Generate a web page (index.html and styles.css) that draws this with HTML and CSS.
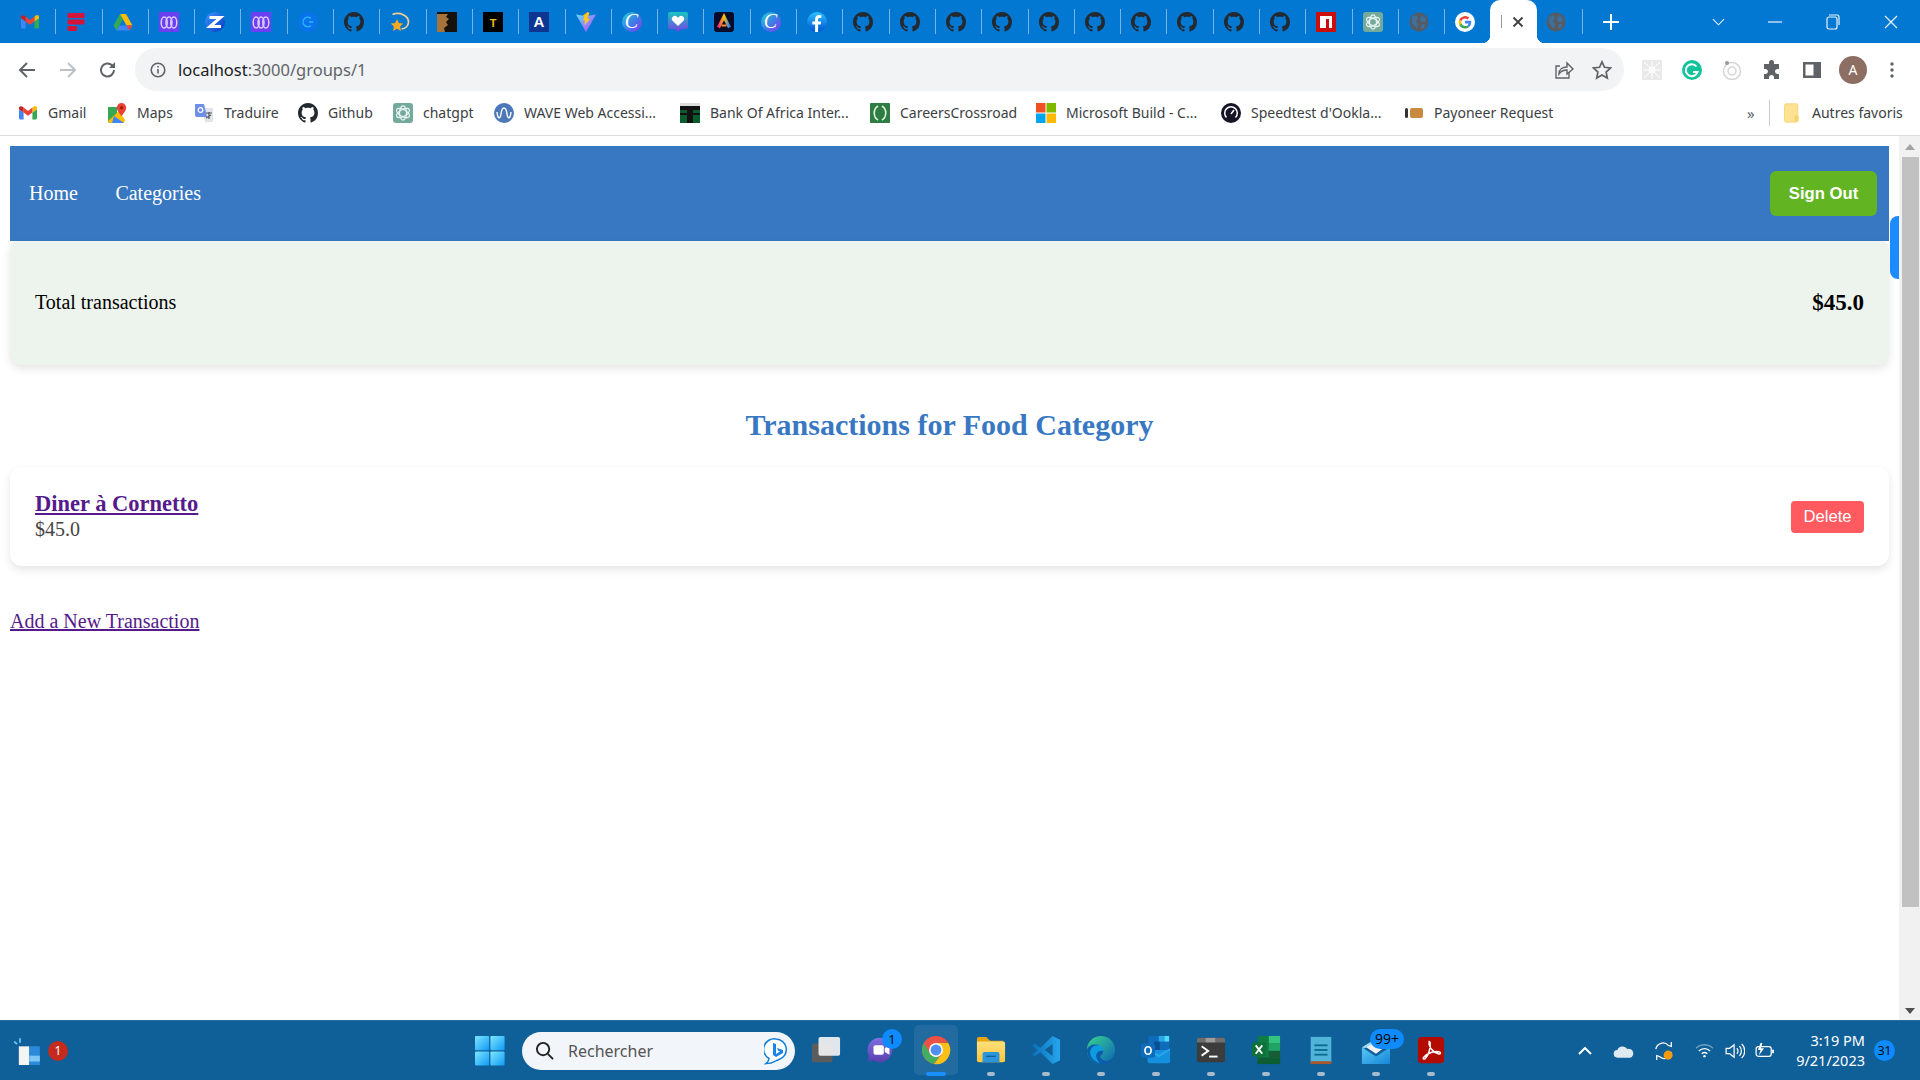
FILE: index.html
```html
<!DOCTYPE html>
<html lang="fr">
<head>
<meta charset="utf-8">
<title>Transactions for Food Category</title>
<link rel="stylesheet" href="styles.css">
</head>
<body>
<svg class="defs" width="0" height="0" aria-hidden="true">
  <defs>
    <linearGradient id="gCanva" x1="0" y1="0" x2="1" y2="1"><stop offset="0" stop-color="#22d3cf"/><stop offset=".55" stop-color="#3f7ae8"/><stop offset="1" stop-color="#8a35ec"/></linearGradient>
    <linearGradient id="gHeart" x1="0" y1="0" x2="0" y2="1"><stop offset="0" stop-color="#16c8c0"/><stop offset="1" stop-color="#7c3fe4"/></linearGradient>
    <linearGradient id="gFb" x1="0" y1="0" x2="0" y2="1"><stop offset="0" stop-color="#2cc0ff"/><stop offset="1" stop-color="#0052d6"/></linearGradient>
    <linearGradient id="gZ" x1="0" y1="0" x2="1" y2="1"><stop offset="0" stop-color="#3a98ff"/><stop offset="1" stop-color="#0736c4"/></linearGradient>
    <linearGradient id="gVite" x1="0" y1="0" x2="1" y2="1"><stop offset="0" stop-color="#5fdcff"/><stop offset="1" stop-color="#c63cff"/></linearGradient>
    <linearGradient id="gAdobe" x1="0" y1="0" x2="1" y2="0"><stop offset="0" stop-color="#ff2d78"/><stop offset=".5" stop-color="#ffc400"/><stop offset="1" stop-color="#2f7bff"/></linearGradient>
    <linearGradient id="gWin" x1="0" y1="0" x2="1" y2="1"><stop offset="0" stop-color="#7fe6ff"/><stop offset="1" stop-color="#0f9af5"/></linearGradient>
    <linearGradient id="gFolder" x1="0" y1="0" x2="0" y2="1"><stop offset="0" stop-color="#ffe07a"/><stop offset="1" stop-color="#fcc43c"/></linearGradient>
    <linearGradient id="gVs" x1="0" y1="0" x2="1" y2="0"><stop offset="0" stop-color="#0a6fb8"/><stop offset="1" stop-color="#26a6ee"/></linearGradient>
    <linearGradient id="gEdge" x1="0" y1="0" x2="1" y2="1"><stop offset="0" stop-color="#38d58a"/><stop offset="1" stop-color="#0c62b8"/></linearGradient>
    <linearGradient id="gMail" x1="0" y1="0" x2="1" y2="1"><stop offset="0" stop-color="#58c8f5"/><stop offset="1" stop-color="#1586d8"/></linearGradient>
    <linearGradient id="gTeams" x1="0" y1="0" x2="0" y2="1"><stop offset="0" stop-color="#7f6fe0"/><stop offset="1" stop-color="#5a3fae"/></linearGradient>

    <symbol id="gh" viewBox="0 0 16 16"><path fill="#24292f" fill-rule="evenodd" d="M8 0C3.58 0 0 3.58 0 8c0 3.54 2.29 6.53 5.47 7.59.4.07.55-.17.55-.38 0-.19-.01-.82-.01-1.49-2.01.37-2.53-.49-2.69-.94-.09-.23-.48-.94-.82-1.13-.28-.15-.68-.52-.01-.53.63-.01 1.08.58 1.23.82.72 1.21 1.87.87 2.33.66.07-.52.28-.87.51-1.07-1.78-.2-3.64-.89-3.64-3.95 0-.87.31-1.59.82-2.15-.08-.2-.36-1.02.08-2.12 0 0 .67-.21 2.2.82.64-.18 1.32-.27 2-.27s1.36.09 2 .27c1.53-1.04 2.2-.82 2.2-.82.44 1.1.16 1.92.08 2.12.51.56.82 1.27.82 2.15 0 3.07-1.87 3.75-3.65 3.95.29.25.54.73.54 1.48 0 1.07-.01 1.93-.01 2.2 0 .21.15.46.55.38A8.013 8.013 0 0016 8c0-4.42-3.58-8-8-8z"/></symbol>
    <symbol id="gmail" viewBox="0 0 20 20">
      <path fill="#4285f4" d="M1 6.200V15c0 .8.6 1.500 1.400 1.500h3.200V9.400z"/>
      <path fill="#34a853" d="M14.400 9.400v7.100h3.200c.8 0 1.400-.7 1.400-1.500V6.200z"/>
      <path fill="#fbbc04" d="M14.400 4.500v4.900L19 6.200V5c0-1.600-1.800-2.500-3-1.500z"/>
      <path fill="#ea4335" d="M5.600 9.400V4.500L10 8l4.400-3.500v4.900L10 12.800z"/>
      <path fill="#c5221f" d="M1 5v1.200l4.600 3.200V4.500L4 3.500C2.800 2.600 1 3.500 1 5z"/>
    </symbol>
    <symbol id="fbars" viewBox="0 0 20 20"><g fill="#d6143a"><rect x="1.500" y="1" width="17" height="5" rx="1"/><rect x="1.500" y="7.400" width="17" height="5" rx="1"/><rect x="1.500" y="14" width="9.500" height="5" rx="1"/></g></symbol>
    <symbol id="drive" viewBox="0 0 20 20">
      <path fill="#34a853" d="M7 2 .5 13.500l3 5L10 7z"/>
      <path fill="#fbbc04" d="M7 2h6l6.500 11.500h-6z"/>
      <path fill="#4285f4" d="M3.500 18.500h13l3-5H6.500z"/>
      <path fill="#ea4335" d="M16.500 18.500l3-5h-6z"/>
    </symbol>
    <symbol id="mm" viewBox="0 0 20 20"><rect width="20" height="20" fill="#6d3ff2"/><g fill="none" stroke="#dccfff" stroke-width="1.500"><ellipse cx="5.200" cy="10.500" rx="3" ry="5.500"/><ellipse cx="10" cy="10.500" rx="3" ry="5.500"/><ellipse cx="14.800" cy="10.500" rx="3" ry="5.500"/></g></symbol>
    <symbol id="zalo" viewBox="0 0 20 20"><circle cx="10" cy="10" r="10" fill="url(#gZ)"/><path fill="none" stroke="#fff" stroke-width="3" d="M4.500 5.500h11L5 14.500h11"/></symbol>
    <symbol id="cblue" viewBox="0 0 20 20"><circle cx="10" cy="10" r="10" fill="#0a72ea"/><path fill="none" stroke="#25bdf8" stroke-width="1.400" d="M12.800 6.400a4.700 4.700 0 1 0 0 7.200M10.800 10h4.400"/></symbol>
    <symbol id="star" viewBox="0 0 20 20"><path fill="none" stroke="#f4cf8f" stroke-width="1.700" d="M2.500 2.500c7-3 16 1 16 7.500 0 4-3.500 6.500-7 7"/><path fill="#f7a823" d="M7 7l1.900 4 4.400.5-3.200 3 .9 4.500-4-2.300-4 2.300.9-4.500-3.200-3 4.400-.5z"/></symbol>
    <symbol id="brown" viewBox="0 0 20 20"><rect width="20" height="20" fill="#16110d"/><path fill="#a6743a" d="M0 2h11l-2 3 3 2-3 3 2 3-4 3 1 4H0z"/></symbol>
    <symbol id="ttile" viewBox="0 0 20 20"><rect width="20" height="20" fill="#000"/><text class="ico-t ico-t-y" x="10" y="14.500">T</text></symbol>
    <symbol id="atile" viewBox="0 0 20 20"><rect width="20" height="20" fill="#0d3591"/><text class="ico-t ico-t-w" x="10" y="15">A</text></symbol>
    <symbol id="vite" viewBox="0 0 20 20"><path fill="url(#gVite)" d="M0 2.500l10 17.500L20 2.500l-6 1-4 .5-4-.5z"/><path fill="#ffc81f" d="M11.500 0 6.500 4l2 .5-1.500 3.500 2 .5-.5 5L14 7l-2.500-.5L13.500 1z"/></symbol>
    <symbol id="canva" viewBox="0 0 20 20"><circle cx="10" cy="10" r="10" fill="url(#gCanva)"/><text class="ico-canva" x="9.500" y="16">C</text></symbol>
    <symbol id="heart" viewBox="0 0 20 20"><path fill="url(#gHeart)" d="M2 0h16a2 2 0 0 1 2 2v13a2 2 0 0 1-2 2h-5l-3 3-3-3H2a2 2 0 0 1-2-2V2a2 2 0 0 1 2-2z"/><path fill="#fff" d="M10 14 4.800 9a3 3 0 0 1 4.200-4.300l1 1 1-1A3 3 0 0 1 15.200 9z"/></symbol>
    <symbol id="adobe" viewBox="0 0 20 20"><rect width="20" height="20" rx="3" fill="#070b28"/><path fill="none" stroke="url(#gAdobe)" stroke-width="3.200" d="M4.500 15.500 10 4.500l5.500 11"/><path stroke="#ff8a2a" stroke-width="2" d="M7.500 13.500h5"/></symbol>
    <symbol id="fb" viewBox="0 0 20 20"><circle cx="10" cy="10" r="10" fill="url(#gFb)"/><path fill="#fff" d="M13.700 12.500l.5-3h-3.100V7.600c0-.9.400-1.600 1.700-1.600h1.500V3.300S13.200 3 12.100 3C9.700 3 8.100 4.400 8.100 6.900v2.600H5.300v3h2.800V20h3v-7.500z"/></symbol>
    <symbol id="npm" viewBox="0 0 20 20"><rect width="20" height="20" fill="#cc0d0d"/><path fill="#fff" d="M4 4h12v12h-3V7h-3v9H4z"/></symbol>
    <symbol id="gpt" viewBox="0 0 20 20"><rect width="20" height="20" rx="3" fill="#74aa9c"/><g fill="none" stroke="#e8f3f0" stroke-width="1.200"><ellipse cx="10" cy="10" rx="3.500" ry="7.200"/><ellipse cx="10" cy="10" rx="3.500" ry="7.200" transform="rotate(60 10 10)"/><ellipse cx="10" cy="10" rx="3.500" ry="7.200" transform="rotate(120 10 10)"/></g></symbol>
    <symbol id="globe" viewBox="0 0 20 20"><circle cx="10" cy="10" r="9.500" fill="#565b62"/><path fill="#2f7fc4" opacity=".6" d="M3 5l4-2 2 3-2 3 2 3-1 5-3-4-2-2zM13 3l4 4-1 3h-4l-1-3zM13 12h3l-1 4-3 1z"/></symbol>
    <symbol id="google" viewBox="0 0 20 20"><circle cx="10" cy="10" r="10" fill="#fff"/><path fill="#4285f4" d="M16.200 10.200c0-.5 0-.9-.1-1.400H10v2.600h3.500a3 3 0 0 1-1.300 2l2 1.600c1.200-1.100 2-2.800 2-4.800z"/><path fill="#34a853" d="M10 16.500c1.800 0 3.200-.6 4.200-1.500l-2-1.600c-.6.400-1.300.6-2.200.6-1.700 0-3.100-1.100-3.600-2.700l-2.100 1.600c1 2.100 3.200 3.600 5.700 3.600z"/><path fill="#fbbc04" d="M6.400 11.800a4 4 0 0 1 0-2.600L4.300 7.600a6.500 6.500 0 0 0 0 5.800z"/><path fill="#ea4335" d="M10 6.500c.9 0 1.800.3 2.400.9l1.900-1.800A6.500 6.500 0 0 0 4.300 7.600l2.100 1.600C6.900 7.600 8.300 6.500 10 6.500z"/></symbol>

    <symbol id="maps" viewBox="0 0 20 20"><path fill="#34a853" d="M1 4l9 0v16H3a2 2 0 0 1-2-2z"/><path fill="#fbbc04" d="M1 18 12 8l6 9-1 3H3z"/><path fill="#4285f4" d="M7 13 17 20H5z"/><path fill="#ea4335" d="M14.500 0a4.700 4.700 0 0 1 4.700 4.700c0 3.200-4.700 8.300-4.700 8.300S9.800 7.900 9.800 4.700A4.700 4.700 0 0 1 14.500 0z"/><circle cx="14.500" cy="4.700" r="1.700" fill="#a61c12"/></symbol>
    <symbol id="translate" viewBox="0 0 20 20"><path fill="#dfe3ea" d="M8 5h11v14H11z"/><path fill="#6d8fe8" d="M1 1h9l3 13H3a2 2 0 0 1-2-2z"/><circle cx="6.500" cy="7" r="2.300" fill="none" stroke="#fff" stroke-width="1.200"/><path stroke="#555" stroke-width="1.200" d="M12 10h6M15 9v7M12 15l5-3"/></symbol>
    <symbol id="wave" viewBox="0 0 20 20"><circle cx="10" cy="10" r="10" fill="#4c78b8"/><path fill="none" stroke="#fff" stroke-width="1.400" d="M3 9c1 9 3.500 6 4 2s1.500-6 3-6 2.500 2 3 6 3 7 4-2"/></symbol>
    <symbol id="bank" viewBox="0 0 20 20"><rect width="20" height="20" fill="#0a5c2c"/><rect width="20" height="3" fill="#ddd"/><path fill="#111" d="M0 3h20v4h-7v3h7v2h-7v8H7v-8H0v-2h7V7H0z"/></symbol>
    <symbol id="careers" viewBox="0 0 20 20"><rect width="20" height="20" rx="1" fill="#2f7d43"/><g fill="none" stroke="#dff2df" stroke-width="1.600"><path d="M8 3C3 6 3 14 8 17M12 3c5 3 5 11 0 14"/></g></symbol>
    <symbol id="ms" viewBox="0 0 20 20"><rect width="9.500" height="9.500" fill="#f25022"/><rect x="10.500" width="9.500" height="9.500" fill="#7fba00"/><rect y="10.500" width="9.500" height="9.500" fill="#00a4ef"/><rect x="10.500" y="10.500" width="9.500" height="9.500" fill="#ffb900"/></symbol>
    <symbol id="speed" viewBox="0 0 20 20"><circle cx="10" cy="10" r="10" fill="#141526"/><path fill="none" stroke="#fff" stroke-width="1.500" d="M5.500 14.500a6.300 6.300 0 1 1 9 0"/><path stroke="#fff" stroke-width="1.500" d="M10 11l3-4"/></symbol>
    <symbol id="payoneer" viewBox="0 0 20 20"><rect x="1" y="5" width="3" height="10" rx="1.500" fill="#333"/><rect x="6" y="5" width="13" height="10" rx="2" fill="#c88a3e"/></symbol>
    <symbol id="folder" viewBox="0 0 20 24"><path fill="#fde293" stroke="#f6d36b" d="M3 1h12a2 2 0 0 1 2 2v18a2 2 0 0 1-2 2H3a2 2 0 0 1-2-2V3a2 2 0 0 1 2-2z"/><rect x="13" y="15" width="5" height="7" rx="1.500" fill="#f6d36b"/></symbol>

    <symbol id="win" viewBox="0 0 30 30"><g fill="url(#gWin)"><rect x="0" y="0" width="14.200" height="14.200" rx="1"/><rect x="15.400" y="0" width="14.200" height="14.200" rx="1"/><rect x="0" y="15.400" width="14.200" height="14.200" rx="1"/><rect x="15.400" y="15.400" width="14.200" height="14.200" rx="1"/></g></symbol>
    <symbol id="taskview" viewBox="0 0 32 32"><rect x="1" y="9" width="22" height="20" rx="2" fill="#5c5c5c"/><rect x="8" y="2" width="23" height="20" rx="2" fill="#f2f2f2" opacity=".92"/></symbol>
    <symbol id="teams" viewBox="0 0 32 32"><path fill="url(#gTeams)" d="M15 3a13 13 0 1 1-8 23.300L2 29l1-7A13 13 0 0 1 15 3z"/><rect x="8" y="11" width="11" height="10" rx="2" fill="#fff"/><path fill="#fff" d="m20 14 5-3v10l-5-3z"/></symbol>
    <symbol id="chrome" viewBox="0 0 32 32"><circle cx="16" cy="16" r="15" fill="#ea4335"/><path fill="#34a853" d="M3 8.500a15 15 0 0 0 11 22.300L20 22H11z"/><path fill="#fbbc04" d="M14 31A15 15 0 0 0 29 8.500H16l6 12z"/><circle cx="16" cy="16" r="7.500" fill="#fff"/><circle cx="16" cy="16" r="5.800" fill="#4285f4"/></symbol>
    <symbol id="explorer" viewBox="0 0 32 32"><path fill="#e7a40e" d="M1 4a2 2 0 0 1 2-2h8l4 4h14v8H1z"/><path fill="url(#gFolder)" d="M1 7h28a2 2 0 0 1 2 2v18a2 2 0 0 1-2 2H3a2 2 0 0 1-2-2z"/><path fill="#2a95dd" d="M7 20a2 2 0 0 1 2-2h14a2 2 0 0 1 2 2v9H7z"/><rect x="11" y="22" width="10" height="1.500" fill="#0f5f98"/></symbol>
    <symbol id="vscode" viewBox="0 0 32 32"><path fill="url(#gVs)" d="M23 1l8 4v22l-8 4L10 18.500 4 23l-3-2 6-5-6-5 3-2 6 4.500zM23 9.500 14.500 16l8.500 6.500z"/></symbol>
    <symbol id="edge" viewBox="0 0 32 32"><circle cx="16" cy="16" r="15" fill="url(#gEdge)"/><path fill="#0c5caa" d="M1 16C3 8 16 8 18 16c1 4-2 5-3 7 2 6 10 6 14 1-3 6-8 7-13 7C8 31 1 24 1 16z"/><path fill="#0d9ce0" d="M6 24C2 18 6 11 12 11c4 0 7 3 6 6-4-1-8 2-7 7 .5 2.500 2 4 4 6-4-1-7-3-9-6z"/></symbol>
    <symbol id="outlook" viewBox="0 0 32 32"><rect x="8" y="1" width="22" height="15" fill="#0f6cbd"/><rect x="19" y="1" width="6" height="6" fill="#28a8ea"/><rect x="25" y="1" width="5" height="6" fill="#50d9ff"/><rect x="14" y="7" width="6" height="9" fill="#0a4f8f"/><path fill="#1490df" d="M7 16h24v12a2 2 0 0 1-2 2H9a2 2 0 0 1-2-2z"/><path fill="#28a8ea" d="m7 16 12 8 12-8v-2L19 21 7 14z"/><rect x="0" y="9" width="15" height="15" rx="2" fill="#0f6cbd"/><ellipse cx="7.500" cy="16.500" rx="3.300" ry="4" fill="none" stroke="#fff" stroke-width="1.800"/></symbol>
    <symbol id="terminal" viewBox="0 0 32 32"><rect x="1" y="3" width="30" height="26" rx="2" fill="#3c3c3c"/><path fill="#6e6e6e" d="M1 5a2 2 0 0 1 2-2h7v5H1z"/><rect x="10" y="3" width="11" height="5" fill="#9c9c9c"/><path fill="#6e6e6e" d="M21 3h8a2 2 0 0 1 2 2v3H21z"/><path fill="none" stroke="#fff" stroke-width="2" d="m6 12 7 5-7 5"/><rect x="14" y="22" width="9" height="2" fill="#fff"/></symbol>
    <symbol id="excel" viewBox="0 0 32 32"><rect x="7" y="1" width="24" height="30" rx="2" fill="#107c41"/><rect x="19" y="1" width="12" height="8" fill="#33c481"/><rect x="19" y="9" width="12" height="8" fill="#21a366"/><rect x="19" y="17" width="12" height="7" fill="#185c37"/><rect x="7" y="24" width="24" height="7" fill="#0e5c31"/><rect x="1" y="8" width="15" height="15" rx="2" fill="#0f7038"/><path stroke="#fff" stroke-width="2" d="m5 11 7 9M12 11l-7 9"/></symbol>
    <symbol id="notepad" viewBox="0 0 32 32"><rect x="5" y="2" width="22" height="28" fill="#4fb4d8"/><rect x="5" y="28" width="22" height="3" fill="#a8562a"/><g fill="#0f6c94"><rect x="9" y="10" width="14" height="2"/><rect x="9" y="15" width="14" height="2"/><rect x="9" y="20" width="14" height="2"/></g></symbol>
    <symbol id="mail" viewBox="0 0 32 32"><path fill="#f2f2f2" d="M4 12 20 3l8 8-12 9z"/><path fill="url(#gMail)" d="M1 13l15 10 15-10v18H1z"/><path fill="#9fdcf7" d="M1 13l10-6 2 2-9 5z"/></symbol>
    <symbol id="acrobat" viewBox="0 0 32 32"><rect x="2" y="2" width="28" height="28" rx="4" fill="#b30b00"/><path fill="none" stroke="#fff" stroke-width="1.600" d="M14 7c-1 5 3 11 10 13 2 .6 3-1 1-2-5-1-13 1-17 6-1 2 1 2 2 1 3-3 6-11 5-17-.2-1-1-1-1-1z"/></symbol>
    <symbol id="bing" viewBox="0 0 24 28"><path fill="#fff" stroke="#0f7fd8" stroke-width="1.500" d="M12 2a10.500 10.500 0 0 1 3 20.500c-2 .8-5 2.500-8 3.500l-5 .5c2-1.500 3-3 3-5A10.500 10.500 0 0 1 12 2z"/><path fill="#1a85e8" d="M9 6l3 1v10l4-2.500-2-1-1-2.500 6 2v3L12 20l-3-2z"/></symbol>
    <symbol id="widgets" viewBox="0 0 24 24"><path stroke="#6cc6ee" stroke-width="1.500" d="M6 1v4M1 4l2.500 2"/><rect x="5" y="8" width="9" height="16" fill="#f4f4f4"/><rect x="14" y="8" width="9" height="16" fill="#2a8bdc"/><rect x="14" y="16" width="9" height="5" fill="#7cc8f2"/></symbol>
  </defs>
</svg>

<div class="screen">
  <header class="tabs">
    <div class="tab"><svg class="fav"><use href="#gmail"/></svg></div>
    <div class="tab"><svg class="fav"><use href="#fbars"/></svg></div>
    <div class="tab"><svg class="fav"><use href="#drive"/></svg></div>
    <div class="tab"><svg class="fav"><use href="#mm"/></svg></div>
    <div class="tab"><svg class="fav"><use href="#zalo"/></svg></div>
    <div class="tab"><svg class="fav"><use href="#mm"/></svg></div>
    <div class="tab"><svg class="fav"><use href="#cblue"/></svg></div>
    <div class="tab"><svg class="fav"><use href="#gh"/></svg></div>
    <div class="tab"><svg class="fav"><use href="#star"/></svg></div>
    <div class="tab"><svg class="fav"><use href="#brown"/></svg></div>
    <div class="tab"><svg class="fav"><use href="#ttile"/></svg></div>
    <div class="tab"><svg class="fav"><use href="#atile"/></svg></div>
    <div class="tab"><svg class="fav"><use href="#vite"/></svg></div>
    <div class="tab"><svg class="fav"><use href="#canva"/></svg></div>
    <div class="tab"><svg class="fav"><use href="#heart"/></svg></div>
    <div class="tab"><svg class="fav"><use href="#adobe"/></svg></div>
    <div class="tab"><svg class="fav"><use href="#canva"/></svg></div>
    <div class="tab"><svg class="fav"><use href="#fb"/></svg></div>
    <div class="tab"><svg class="fav"><use href="#gh"/></svg></div>
    <div class="tab"><svg class="fav"><use href="#gh"/></svg></div>
    <div class="tab"><svg class="fav"><use href="#gh"/></svg></div>
    <div class="tab"><svg class="fav"><use href="#gh"/></svg></div>
    <div class="tab"><svg class="fav"><use href="#gh"/></svg></div>
    <div class="tab"><svg class="fav"><use href="#gh"/></svg></div>
    <div class="tab"><svg class="fav"><use href="#gh"/></svg></div>
    <div class="tab"><svg class="fav"><use href="#gh"/></svg></div>
    <div class="tab"><svg class="fav"><use href="#gh"/></svg></div>
    <div class="tab"><svg class="fav"><use href="#gh"/></svg></div>
    <div class="tab"><svg class="fav"><use href="#npm"/></svg></div>
    <div class="tab"><svg class="fav"><use href="#gpt"/></svg></div>
    <div class="tab"><svg class="fav"><use href="#globe"/></svg></div>
    <div class="tab tab-last"><svg class="fav"><use href="#google"/></svg></div>
    <div class="tab-active">
      <span class="tab-title-stub"></span>
      <svg class="tab-x" viewBox="0 0 12 12"><path d="M1.500 1.500l9 9M10.500 1.500l-9 9"/></svg>
    </div>
    <div class="tab tab-after"><svg class="fav"><use href="#globe"/></svg></div>
    <svg class="tab-new" viewBox="0 0 16 16"><path d="M8 0v16M0 8h16"/></svg>
    <div class="win-controls">
      <svg class="win-btn win-chev" viewBox="0 0 14 8"><path d="M1 1l6 6 6-6"/></svg>
      <svg class="win-btn win-min" viewBox="0 0 14 2"><path d="M0 1h14"/></svg>
      <svg class="win-btn win-max" viewBox="0 0 14 16"><path d="M3 1h8a2 2 0 0 1 2 2v8M1 5a2 2 0 0 1 2-2h6a2 2 0 0 1 2 2v8a2 2 0 0 1-2 2H3a2 2 0 0 1-2-2z"/></svg>
      <svg class="win-btn win-close" viewBox="0 0 14 14"><path d="M1 1l12 12M13 1 1 13"/></svg>
    </div>
  </header>

  <div class="toolbar">
    <svg class="tb-ico tb-back" viewBox="0 0 18 18"><path d="M17 9H2M9 2 2 9l7 7"/></svg>
    <svg class="tb-ico tb-fwd" viewBox="0 0 18 18"><path d="M1 9h15M9 2l7 7-7 7"/></svg>
    <svg class="tb-ico tb-reload" viewBox="0 0 18 18"><path d="M15 9a6.500 6.500 0 1 1-2-4.700L15 6"/><path class="tb-fill" d="M16 1v6h-6z"/></svg>
    <div class="omnibox">
      <svg class="omni-info" viewBox="0 0 16 16"><circle cx="8" cy="8" r="6.800"/><path d="M8 7v4.500M8 4v1.600"/></svg>
      <span class="omni-url"><span class="omni-host">localhost</span>:3000/groups/1</span>
      <svg class="omni-share" viewBox="0 0 20 20"><path d="M15 12v6H2V6h4"/><path d="M5 14c0-5 4-7 8-7V3l6 6-6 5v-4c-3 0-6 1-8 4z"/></svg>
      <svg class="omni-star" viewBox="0 0 20 20"><path d="M10 1.800l2.500 5.500 6 .7-4.400 4 1.200 6L10 15l-5.300 3 1.200-6-4.400-4 6-.7z"/></svg>
    </div>
    <div class="ext-row">
      <svg class="ext" viewBox="0 0 20 20"><rect width="20" height="20" rx="1" fill="#e9e9e9"/><g fill="none" stroke="#fff" stroke-width="1"><circle cx="10" cy="10" r="3"/><path d="M2 2l16 16M18 2 2 18M10 1v18M1 10h18"/></g></svg>
      <svg class="ext" viewBox="0 0 20 20"><circle cx="10" cy="10" r="10" fill="#15c39a"/><path fill="none" stroke="#fff" stroke-width="2" d="M14.500 6.500a6 6 0 1 0 1 5.500h-4.500"/></svg>
      <svg class="ext" viewBox="0 0 20 20"><g fill="none" stroke="#d4d4d4" stroke-width="1.500"><circle cx="10" cy="11" r="8.500"/><circle cx="10" cy="11" r="4"/></g><circle cx="5" cy="3" r="2" fill="#999"/></svg>
      <svg class="ext" viewBox="0 0 20 20"><path fill="#5f6368" d="M7 2.500a2.500 2.500 0 0 1 5 0V4h5v5h-1.500a2.500 2.500 0 0 0 0 5H17v5h-5v-1.500a2.500 2.500 0 0 0-5 0V19H2v-5h1.500a2.500 2.500 0 0 0 0-5H2V4h5z"/></svg>
      <svg class="ext" viewBox="0 0 20 20"><path fill="#5f6368" fill-rule="evenodd" d="M1 2h18v16H1zM3.500 4.500v11h8v-11z"/></svg>
      <span class="avatar">A</span>
      <svg class="ext-dots" viewBox="0 0 4 16"><circle cx="2" cy="2" r="1.700"/><circle cx="2" cy="8" r="1.700"/><circle cx="2" cy="14" r="1.700"/></svg>
    </div>
  </div>

  <nav class="bookmarks">
    <a class="bm"><svg class="fav"><use href="#gmail"/></svg>Gmail</a>
    <a class="bm"><svg class="fav"><use href="#maps"/></svg>Maps</a>
    <a class="bm"><svg class="fav"><use href="#translate"/></svg>Traduire</a>
    <a class="bm"><svg class="fav"><use href="#gh"/></svg>Github</a>
    <a class="bm"><svg class="fav"><use href="#gpt"/></svg>chatgpt</a>
    <a class="bm"><svg class="fav"><use href="#wave"/></svg>WAVE Web Accessi...</a>
    <a class="bm"><svg class="fav"><use href="#bank"/></svg>Bank Of Africa Inter...</a>
    <a class="bm"><svg class="fav"><use href="#careers"/></svg>CareersCrossroad</a>
    <a class="bm"><svg class="fav"><use href="#ms"/></svg>Microsoft Build - C...</a>
    <a class="bm"><svg class="fav"><use href="#speed"/></svg>Speedtest d'Ookla...</a>
    <a class="bm"><svg class="fav"><use href="#payoneer"/></svg>Payoneer Request</a>
    <span class="bm-more">»</span>
    <a class="bm bm-other"><svg class="fav"><use href="#folder"/></svg>Autres favoris</a>
  </nav>

  <main class="viewport">
    <div class="page">
      <div class="app-nav">
        <a class="app-link">Home</a>
        <a class="app-link">Categories</a>
        <button class="signout">Sign Out</button>
      </div>
      <section class="summary">
        <span>Total transactions</span>
        <strong class="summary-amount">$45.0</strong>
      </section>
      <h1 class="heading">Transactions for Food Category</h1>
      <article class="item">
        <div class="item-text">
          <a class="item-title">Diner à Cornetto</a>
          <span class="item-price">$45.0</span>
        </div>
        <button class="delete">Delete</button>
      </article>
      <a class="add-link">Add a New Transaction</a>
    </div>
    <span class="side-tab"></span>
    <div class="scrollbar">
      <span class="sb-up"></span>
      <span class="sb-thumb"></span>
      <span class="sb-down"></span>
    </div>
  </main>

  <footer class="taskbar">
    <div class="tk-left">
      <svg class="tk-widgets"><use href="#widgets"/></svg>
      <span class="tk-badge-red">1</span>
    </div>
    <svg class="tk-win"><use href="#win"/></svg>
    <div class="tk-search">
      <svg class="tk-mag" viewBox="0 0 20 20"><circle cx="8.500" cy="8.500" r="6.500"/><path d="M13.500 13.500 19 19"/></svg>
      <span class="tk-search-text">Rechercher</span>
      <svg class="tk-bing"><use href="#bing"/></svg>
    </div>
    <div class="tk-apps">
      <div class="app"><svg class="app-ico"><use href="#taskview"/></svg></div>
      <div class="app"><svg class="app-ico"><use href="#teams"/></svg><span class="pill pill-teams">1</span></div>
      <div class="app app-active"><svg class="app-ico"><use href="#chrome"/></svg></div>
      <div class="app app-run"><svg class="app-ico"><use href="#explorer"/></svg></div>
      <div class="app app-run"><svg class="app-ico"><use href="#vscode"/></svg></div>
      <div class="app app-run"><svg class="app-ico"><use href="#edge"/></svg></div>
      <div class="app app-run"><svg class="app-ico"><use href="#outlook"/></svg></div>
      <div class="app app-run"><svg class="app-ico"><use href="#terminal"/></svg></div>
      <div class="app app-run"><svg class="app-ico"><use href="#excel"/></svg></div>
      <div class="app app-run"><svg class="app-ico"><use href="#notepad"/></svg></div>
      <div class="app app-run"><svg class="app-ico"><use href="#mail"/></svg><span class="pill pill-mail">99+</span></div>
      <div class="app app-run"><svg class="app-ico"><use href="#acrobat"/></svg></div>
    </div>
    <div class="tray">
      <svg class="tr tr-up" viewBox="0 0 14 8"><path d="M1 7l6-6 6 6"/></svg>
      <svg class="tr tr-cloud" viewBox="0 0 22 14"><path fill="#dfe9f2" d="M5 14a4 4 0 0 1-.5-8A6 6 0 0 1 15 5a4.500 4.500 0 0 1 3 9z"/></svg>
      <svg class="tr tr-sync" viewBox="0 0 22 22"><path d="M2 9a8 8 0 0 1 14-4l3 1V1M19 12a8 8 0 0 1-1 2M16 18a8 8 0 0 1-10-1l-3-1v5"/><circle class="tr-dot" cx="15.500" cy="15.500" r="5"/></svg>
      <svg class="tr tr-wifi" viewBox="0 0 20 16"><path d="M1 5.500a13 13 0 0 1 18 0" opacity=".4"/><path d="M4 8.500a8.500 8.500 0 0 1 12 0M7 11.500a4.500 4.500 0 0 1 6 0"/><circle class="tr-fill" cx="10" cy="14" r="1.300"/></svg>
      <svg class="tr tr-vol" viewBox="0 0 22 18"><path d="M1 6h4l5-4v14l-5-4H1zM13 6a4 4 0 0 1 0 6M16 3.500a8 8 0 0 1 0 11M18.500 1a11 11 0 0 1 0 16"/></svg>
      <svg class="tr tr-batt" viewBox="0 0 22 18"><rect x="1" y="4" width="17" height="11" rx="2.500"/><rect class="tr-fill" x="19" y="7.500" width="2" height="4"/><path class="tr-fill" d="M6 0 3 8h3l-2 6 6-8H6.500L8 0z"/></svg>
      <div class="clock"><span>3:19 PM</span><span>9/21/2023</span></div>
      <span class="pill pill-cal">31</span>
    </div>
  </footer>
</div>
</body>
</html>
```

FILE: styles.css
```css
* { box-sizing: border-box; }
html, body { margin: 0; height: 100%; overflow: hidden; }
body { font-family: "Liberation Serif", serif; background: #fff; }
.defs { position: absolute; }

.ico-t { font-family: "Liberation Sans", sans-serif; font-weight: 700; font-size: 15px; text-anchor: middle; }
.ico-t-y { fill: #e8bf1e; font-size: 11px; }
.ico-t-w { fill: #fff; }
.ico-canva { font-family: "Liberation Serif", serif; font-style: italic; font-size: 20px; fill: #fff; text-anchor: middle; }

.screen { display: grid; grid-template-rows: 43px 49px 44px 1fr 60px; height: 100vh; }

/* tab strip */
.tabs { display: flex; align-items: center; background: #0278d3; padding-left: 10px; height: 43px; }
.fav { width: 20px; height: 20px; flex: none; display: block; }
.tab { width: 46.3px; height: 25px; flex: none; display: flex; align-items: center; padding-left: 10px; border-right: 1px solid rgba(255,255,255,.45); }
.tab-last { border-right: 0; width: 44.7px; }
.tab-after { width: 46.6px; padding-left: 9px; }
.tab-active { position: relative; width: 47px; height: 43px; flex: none; background: #fff; border-radius: 10px 10px 0 0; display: flex; align-items: center; padding-left: 11px; gap: 10px; }
.tab-active::before, .tab-active::after { content: ""; position: absolute; bottom: 0; width: 8px; height: 8px; }
.tab-active::before { left: -8px; background: radial-gradient(circle at 0 0, transparent 8px, #fff 8.5px); }
.tab-active::after { right: -8px; background: radial-gradient(circle at 100% 0, transparent 8px, #fff 8.5px); }
.tab-title-stub { width: 1px; height: 13px; background: #999; }
.tab-x { width: 12px; height: 12px; fill: none; stroke: #3c4043; stroke-width: 1.8; }
.tab-new { width: 16px; height: 16px; margin-left: 19.4px; fill: none; stroke: #fff; stroke-width: 2; flex: none; }
.win-controls { margin-left: auto; display: flex; align-items: center; }
.win-btn { fill: none; stroke: #eaf3fb; stroke-width: 1.2; flex: none; }
.win-chev { width: 13px; height: 8px; margin-right: 43px; }
.win-min { width: 14px; height: 2px; margin-right: 44px; }
.win-max { width: 14px; height: 16px; margin-right: 44px; }
.win-close { width: 14px; height: 14px; margin-right: 22px; }

/* toolbar */
.toolbar { display: flex; align-items: center; background: #fff; padding: 4px 0 0 18px; height: 49px; }
.tb-ico { width: 18px; height: 18px; fill: none; stroke-width: 2; flex: none; stroke: #5f6368; }
.tb-fwd { stroke: #bdc1c6; margin-left: 23px; }
.tb-reload { margin-left: 22px; }
.tb-fill { fill: #5f6368; stroke: none; }
.omnibox { margin-left: 18px; width: 1489px; height: 43px; background: #f1f3f4; border-radius: 22px; display: flex; align-items: center; padding-left: 15px; flex: none; }
.omni-info { width: 16px; height: 16px; fill: none; stroke: #5f6368; stroke-width: 1.6; flex: none; }
.omni-url { margin-left: 12px; font: 16.5px "Noto Sans", sans-serif; color: #5f6368; }
.omni-host { color: #202124; }
.omni-share { width: 20px; height: 20px; margin-left: auto; fill: none; stroke: #5f6368; stroke-width: 1.4; flex: none; }
.omni-star { width: 20px; height: 20px; margin-left: 18px; margin-right: 12px; fill: none; stroke: #5f6368; stroke-width: 1.7; flex: none; }
.ext-row { display: flex; align-items: center; margin-left: 18px; }
.ext { width: 20px; height: 20px; flex: none; margin-right: 20px; }
.avatar { width: 28px; height: 28px; border-radius: 50%; background: #8d6e63; color: #fff; font: 14px "Noto Sans", sans-serif; display: flex; align-items: center; justify-content: center; margin-left: -3px; }
.ext-dots { width: 4px; height: 16px; fill: #5f6368; margin-left: 23px; flex: none; }

/* bookmarks */
.bookmarks { display: grid; grid-template-columns: 89px 87px 104px 95px 101px 186px 190px 166px 185px 183px 343px 22px auto; align-items: center; padding: 0 0 2px 18px; height: 44px; background: #fff; border-bottom: 1px solid #dadce0; white-space: nowrap; font: 14px "Noto Sans", sans-serif; color: #3c4043; }
.bm { display: flex; align-items: center; gap: 10px; }
.bm-more { font-size: 15px; color: #5f6368; }
.bm-other { border-left: 1px solid #c9cdd1; padding-left: 12px; height: 26px; }

/* page */
.viewport { position: relative; display: flex; min-height: 0; background: #fff; }
.page { flex: 1; min-width: 0; padding: 10px 10px 0; font-size: 20px; color: #000; }
.app-nav { height: 95px; background: #3878c2; display: flex; align-items: center; padding: 0 12px 0 19px; gap: 37.5px; }
.app-link { color: #fff; font-size: 20px; }
.signout { margin-left: auto; width: 107px; height: 45px; background: #62b422; color: #fff; border: 0; border-radius: 6px; font: 700 16.67px "Liberation Sans", sans-serif; }
.summary { height: 124px; background: #edf3ed; border-radius: 8px 8px 12px 12px; box-shadow: 0 4px 8px rgba(0,0,0,.1); display: flex; align-items: center; justify-content: space-between; padding: 0 25px 1px 25px; }
.summary-amount { font-size: 23px; }
.heading { margin: 42px 0 24px; height: 36px; line-height: 36px; text-align: center; font-size: 30px; font-weight: 700; color: #3878c2; }
.item { height: 99px; background: #fff; border-radius: 12px; box-shadow: 0 4px 8px rgba(0,0,0,.1); display: flex; align-items: center; justify-content: space-between; padding: 0 25px; }
.item-text { display: flex; flex-direction: column; margin-top: -3px; }
.item-title { font-size: 22.5px; line-height: 28px; font-weight: 700; color: #551a8b; text-decoration: underline; }
.item-price { font-size: 20px; line-height: 22px; color: #444; }
.delete { width: 73px; height: 32px; background: #ff5a5f; color: #fff; border: 0; border-radius: 4px; font: 16.67px "Liberation Sans", sans-serif; padding: 0; }
.add-link { display: inline-block; margin-top: 44px; font-size: 20px; line-height: 23px; color: #551a8b; text-decoration: underline; }
.side-tab { position: absolute; right: 21px; top: 80px; width: 9px; height: 63px; background: #1a8cff; border-radius: 8px 0 0 8px; }

.scrollbar { width: 21px; flex: none; background: #f1f1f1; display: flex; flex-direction: column; align-items: center; padding-left: 1px; }
.sb-up, .sb-down { width: 0; height: 0; border-left: 5px solid transparent; border-right: 5px solid transparent; flex: none; }
.sb-up { border-bottom: 6px solid #a3a3a3; margin: 8px 0 7px; }
.sb-thumb { width: 17px; height: 750px; background: #c1c1c1; flex: none; }
.sb-down { border-top: 6px solid #505050; margin-top: auto; margin-bottom: 6px; }

/* taskbar */
.taskbar { display: flex; align-items: center; background: #0f5f98; border-top: 1px solid #2a6a98; height: 60px; padding-left: 13px; color: #fff; }
.tk-left { display: flex; align-items: center; width: 462px; gap: 7px; flex: none; }
.tk-widgets { width: 28px; height: 28px; flex: none; }
.tk-badge-red { width: 20px; height: 20px; border-radius: 50%; background: #c42b1c; font: 12px "Noto Sans", sans-serif; display: flex; align-items: center; justify-content: center; }
.tk-win { width: 30px; height: 30px; flex: none; }
.tk-search { margin-left: 17px; width: 273px; height: 38px; background: #f2f5f9; border-radius: 19px; display: flex; align-items: center; padding-left: 13px; flex: none; }
.tk-mag { width: 19px; height: 19px; fill: none; stroke: #222; stroke-width: 2; flex: none; }
.tk-search-text { margin-left: 14px; font: 16px "Noto Sans", sans-serif; color: #555; }
.tk-bing { width: 24px; height: 28px; margin-left: auto; margin-right: 7px; flex: none; }
.tk-apps { display: flex; align-items: center; margin-left: 3px; }
.app { position: relative; width: 55px; height: 60px; flex: none; display: flex; align-items: center; justify-content: center; }
.app-ico { width: 30px; height: 30px; flex: none; margin-top: -2px; }
.app-run::after { content: ""; position: absolute; bottom: 5px; left: 24px; width: 8px; height: 4px; border-radius: 2px; background: #a6bccd; }
.app-active::before { content: ""; position: absolute; left: 6px; top: 4px; width: 44px; height: 50px; border-radius: 5px; background: rgba(255,255,255,.08); }
.app-active::after { content: ""; position: absolute; bottom: 5px; left: 18px; width: 20px; height: 4px; border-radius: 2px; background: #1a90ff; }
.pill { position: absolute; display: flex; align-items: center; justify-content: center; background: #0f8bff; color: #0a0a0a; font: 13px "Noto Sans", sans-serif; border-radius: 10px; }
.pill-teams { width: 20px; height: 20px; top: 8px; left: 29px; }
.pill-mail { width: 34px; height: 20px; top: 8px; left: 22px; font-size: 14px; }
.tray { display: flex; align-items: center; margin-left: 120px; flex: none; }
.tr { flex: none; fill: none; stroke: #fff; stroke-width: 1.4; }
.tr-up { width: 14px; height: 8px; stroke-width: 2; }
.tr-cloud { width: 21px; height: 14px; margin-left: 21px; stroke: none; }
.tr-sync { width: 20px; height: 20px; margin-left: 20px; }
.tr-dot { fill: #f59a0c; stroke: none; }
.tr-wifi { width: 19px; height: 15px; margin-left: 21px; }
.tr-vol { width: 20px; height: 16px; margin-left: 11px; }
.tr-batt { width: 20px; height: 16px; margin-left: 10px; }
.tr-fill { fill: #fff; stroke: none; }
.clock { display: flex; flex-direction: column; align-items: flex-end; margin: -2px 0 0 11px; font: 14.5px/20px "Noto Sans", sans-serif; color: #fff; width: 79px; }
.pill-cal { position: static; width: 21px; height: 21px; margin-left: 9px; font-size: 12px; border-radius: 50%; }
```
